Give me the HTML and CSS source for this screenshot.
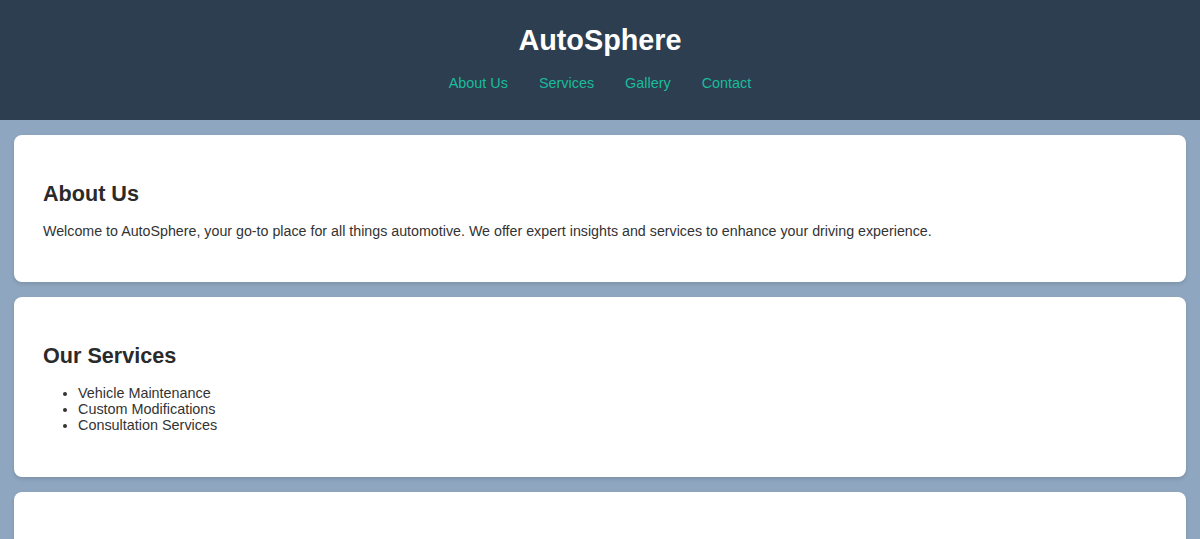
FILE: index.html
```html
<!DOCTYPE html>
<html lang="en">
<head>
<meta charset="utf-8">
<title>AutoSphere</title>
<link rel="stylesheet" href="styles.css">
</head>
<body>
<header class="site-header">
  <h1 class="site-title">AutoSphere</h1>
  <nav class="site-nav">
    <a href="#about">About Us</a>
    <a href="#services">Services</a>
    <a href="#gallery">Gallery</a>
    <a href="#contact">Contact</a>
  </nav>
</header>
<main class="content">
  <section class="card" id="about">
    <h2>About Us</h2>
    <p>Welcome to AutoSphere, your go-to place for all things automotive. We offer expert insights and services to enhance your driving experience.</p>
  </section>
  <section class="card" id="services">
    <h2>Our Services</h2>
    <ul class="service-list">
      <li>Vehicle Maintenance</li>
      <li>Custom Modifications</li>
      <li>Consultation Services</li>
    </ul>
  </section>
  <section class="card" id="gallery">
    <h2>Gallery</h2>
    <p>Explore our collection of featured vehicles and custom builds.</p>
  </section>
</main>
</body>
</html>
```

FILE: styles.css
```css
* { box-sizing: border-box; }

body {
  margin: 0;
  background: #8ea6bf;
  color: #333;
  font-family: "Liberation Sans", Arial, sans-serif;
  font-size: 14.4px;
}

.site-header {
  background: #2c3e50;
  height: 120px;
  padding-top: 24px;
  text-align: center;
}

.site-title {
  margin: 0 0 18px;
  color: #fff;
  font-size: 28.8px;
  font-weight: bold;
}

.site-nav {
  display: flex;
  justify-content: center;
  gap: 31px;
}

.site-nav a {
  color: #1abc9c;
  text-decoration: none;
}

.content {
  display: flex;
  flex-direction: column;
  gap: 15px;
  padding: 15px 14px;
}

.card {
  background: #fff;
  border-radius: 8px;
  box-shadow: 0 2px 4px rgba(0, 0, 0, 0.12);
  padding: 25px 29px 29px;
}

.card h2 {
  margin: 21px 0 16px;
  font-size: 21.6px;
  color: #2a2a2a;
}

.card p {
  margin: 0 0 14.4px;
  font-size: 14.25px;
}

.service-list {
  margin: 0 0 14.4px;
  padding-left: 35px;
}
```
